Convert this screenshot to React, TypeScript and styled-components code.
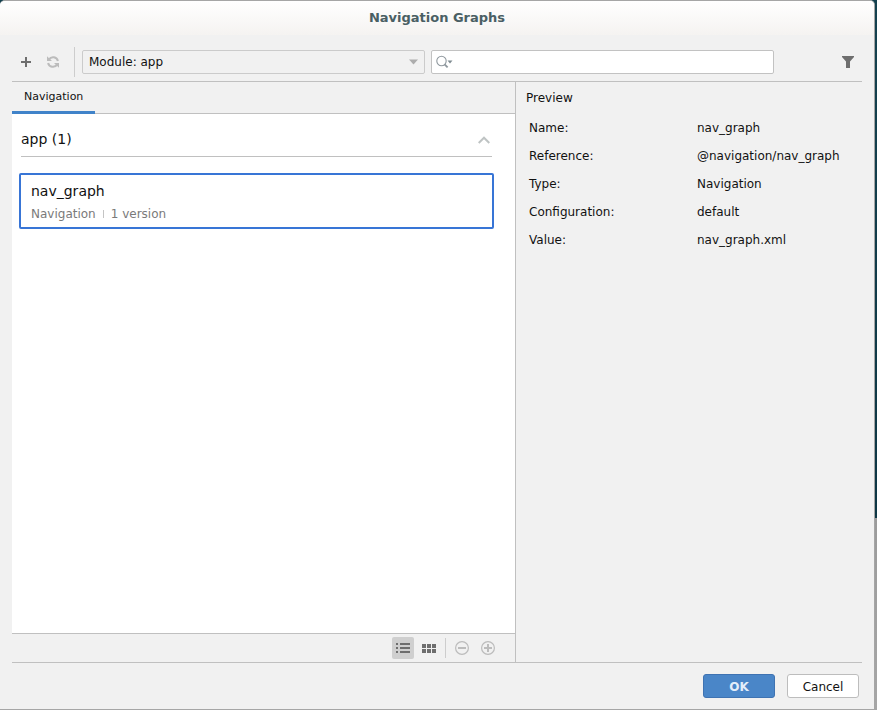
import React from 'react';
import styled, { createGlobalStyle } from 'styled-components';

const line = '#c0c0c0';

const GlobalStyle = createGlobalStyle`
  * { box-sizing: border-box; }
  body {
    margin: 0;
    background: linear-gradient(#14414f 0, #0d3644 73%, #9b9b9b 73%, #a6a6a6 100%);
    color: #111;
    font: 12px/16px "DejaVu Sans", sans-serif;
  }
  button, input, select { font: inherit; color: inherit; }
  svg { display: block; }
`;

const Dialog = styled.div`
  display: flex;
  flex-direction: column;
  min-height: 100vh;
  margin-right: 2px;
  background: #f1f1f1;
  border: solid #a6a6a6;
  border-width: 1px 1px 1px 0;
  border-radius: 5px 5px 0 0;
  overflow: hidden;
`;

const TitleBar = styled.header`
  display: flex;
  align-items: center;
  justify-content: center;
  height: 34px;
  background: linear-gradient(#fff, #f5f3f1);
`;

const Title = styled.h1`
  margin: 0;
  font-size: 13px;
  line-height: 16px;
  font-weight: bold;
  color: #4a5f64;
`;

const Content = styled.main`
  flex: 1;
  display: flex;
  flex-direction: column;
  margin: 0 12px;
`;

const Toolbar = styled.div`
  display: flex;
  align-items: center;
  height: 47px;
  padding: 7px 6px 0 0;
  border-bottom: 1px solid ${line};
`;

const Divider = styled.span<{ $height: number }>`
  width: 1px;
  height: ${p => p.$height}px;
  background: ${p => (p.$height > 12 ? '#cdcdcd' : '#c4c4c4')};
`;

const IconButton = styled.button<{ $width?: number; $active?: boolean }>`
  display: flex;
  align-items: center;
  justify-content: center;
  width: ${p => p.$width ?? 22}px;
  height: 22px;
  padding: 0;
  border: 0;
  border-radius: 2px;
  background: ${p => (p.$active ? '#cfcfcf' : 'transparent')};
`;

const ToolGroup = styled.div`
  display: flex;
  align-items: center;
  gap: 5px;
  padding-left: 3px;
  margin-right: 10px;
`;

const Fields = styled.div`
  flex: 1;
  display: grid;
  grid-template-columns: 1fr 1fr;
  gap: 6px;
  margin: 0 66px 0 7px;
`;

const FieldFrame = styled.label<{ $white?: boolean }>`
  display: flex;
  align-items: center;
  height: 24px;
  padding: 0 ${p => (p.$white ? 4 : 6)}px;
  border: 1px solid ${p => (p.$white ? '#c2c2c2' : '#cbcbcb')};
  border-radius: 2px;
  background: ${p => (p.$white ? '#fff' : '#f1f1f1')};
`;

const ModuleSelect = styled.select`
  flex: 1;
  min-width: 0;
  height: 22px;
  padding: 0;
  border: 0;
  outline: 0;
  appearance: none;
  background: transparent;
`;

const SearchInput = styled.input`
  flex: 1;
  min-width: 0;
  height: 20px;
  padding: 0 4px;
  border: 0;
  outline: 0;
  background: transparent;
`;

const Panes = styled.div`
  flex: 1;
  display: grid;
  grid-template-columns: 504fr 346fr;
  border-bottom: 1px solid ${line};
`;

const ResourcePane = styled.section`
  display: flex;
  flex-direction: column;
  border-right: 1px solid ${line};
`;

const Tabs = styled.nav`
  display: flex;
  height: 32px;
  border-bottom: 1px solid ${line};
`;

const Tab = styled.button`
  height: 32px;
  padding: 0 12px;
  border: 0;
  border-bottom: 3px solid #4083c9;
  background: transparent;
  font-size: 11px;
`;

const ResourceList = styled.div`
  flex: 1;
  padding: 13px 21px 0 7px;
  background: #fff;
`;

const GroupHeader = styled.div`
  display: flex;
  align-items: center;
  justify-content: space-between;
  height: 30px;
  padding: 0 0 6px;
  margin: 0 2px 16px;
  border-bottom: 1px solid ${line};
`;

const GroupName = styled.h2`
  margin: 0;
  font-size: 14px;
  line-height: 24px;
  font-weight: normal;
`;

const CollapseButton = styled(IconButton)`
  width: 16px;
  padding-top: 2px;
`;

const Resource = styled.button`
  display: block;
  width: 100%;
  height: 56px;
  padding: 2px 10px 0;
  border: 2px solid #3875d6;
  border-radius: 2px;
  background: #fff;
  text-align: left;
`;

const ResourceName = styled.span`
  display: block;
  margin-bottom: 6px;
  font-size: 14px;
  line-height: 18px;
`;

const ResourceMeta = styled.span`
  display: flex;
  align-items: center;
  gap: 7px;
  color: #7a7a7a;
`;

const ViewBar = styled.div`
  display: flex;
  align-items: center;
  justify-content: flex-end;
  gap: 4px;
  height: 29px;
  padding-right: 16px;
  border-top: 1px solid ${line};

  ${Divider} { margin: 0 1px; }
`;

const PreviewPane = styled.section`
  padding: 8px 10px;
`;

const PreviewTitle = styled.h2`
  margin: 0 0 8px;
  font-size: 12px;
  line-height: 16px;
  font-weight: normal;
`;

const Details = styled.dl`
  display: grid;
  grid-template-columns: 168px 1fr;
  margin: 0 3px;
  line-height: 28px;

  dd { margin: 0; }
`;

const Footer = styled.footer`
  display: flex;
  justify-content: flex-end;
  gap: 12px;
  padding: 11px 15px;
`;

const DialogButton = styled.button<{ $primary?: boolean }>`
  width: 72px;
  height: 24px;
  padding: 1px 0 0;
  border: 1px solid ${p => (p.$primary ? '#3f73b2' : '#bdbdbd')};
  border-radius: 3px;
  background: ${p => (p.$primary ? '#4a86c8' : '#fff')};
  color: ${p => (p.$primary ? '#e4eefa' : '#111')};
  font-weight: ${p => (p.$primary ? 'bold' : 'normal')};
`;

const PlusIcon = () => (
  <svg width="16" height="16" viewBox="0 0 16 16" fill="#6e6e6e">
    <path d="M7 3h2v4h4v2H9v4H7V9H3V7h4z" />
  </svg>
);

const RefreshIcon = () => (
  <svg width="16" height="16" viewBox="0 0 16 16" fill="none" stroke="#bcbcbc" strokeWidth="2">
    <path d="M4 5.4A4.9 4.9 0 0 1 12.9 7M12 10.6A4.9 4.9 0 0 1 3.1 9" />
    <path d="M2 2.2V7h5zM14 13.8V9H9z" fill="#bcbcbc" stroke="none" />
  </svg>
);

const ArrowDown = () => (
  <svg width="9" height="6" viewBox="0 0 9 6" fill="#adadad">
    <path d="M0 .5h9L4.5 5.5z" />
  </svg>
);

const SearchIcon = () => (
  <svg width="17" height="14" viewBox="0 0 17 14" fill="none" stroke="#8f989e">
    <circle cx="5.5" cy="6" r="4.7" strokeWidth="1.1" />
    <path d="M8.6 9.4 11.6 12.4" strokeWidth="1.8" />
    <path d="M11.5 5.5h5L14 8.5z" fill="#7f8b91" stroke="none" />
  </svg>
);

const FilterIcon = () => (
  <svg width="16" height="16" viewBox="0 0 16 16" fill="#6e6e6e">
    <path d="M2 2h12v1L10 7.5V14H6V7.5L2 3z" />
  </svg>
);

const ChevronUp = () => (
  <svg width="12" height="8" viewBox="0 0 12 8" fill="none" stroke="#bfc4c4" strokeWidth="2">
    <path d="M.7 7 6 1.7 11.3 7" />
  </svg>
);

const ListIcon = () => (
  <svg width="16" height="16" viewBox="0 0 16 16" fill="#6e6e6e">
    <path d="M1 3h2v2H1zM5 3h10v2H5zM1 7h2v2H1zM5 7h10v2H5zM1 11h2v2H1zM5 11h10v2H5z" />
  </svg>
);

const GridIcon = () => (
  <svg width="16" height="16" viewBox="0 0 16 16" fill="#6e6e6e">
    <path d="M1 4h4v4H1zM6 4h4v4H6zM11 4h4v4h-4zM1 9h4v4H1zM6 9h4v4H6zM11 9h4v4h-4z" />
  </svg>
);

const ZoomIcon = ({ plus }: { plus?: boolean }) => (
  <svg width="16" height="16" viewBox="0 0 16 16" fill="none" stroke="#bcbcbc">
    <circle cx="8" cy="8" r="6.4" strokeWidth="1.2" />
    <path d={plus ? 'M4 8h8M8 4v8' : 'M4 8h8'} strokeWidth="2" />
  </svg>
);

const details = [
  ['Name:', 'nav_graph'],
  ['Reference:', '@navigation/nav_graph'],
  ['Type:', 'Navigation'],
  ['Configuration:', 'default'],
  ['Value:', 'nav_graph.xml'],
];

export default function App() {
  return (
    <>
      <GlobalStyle />
      <Dialog role="dialog" aria-labelledby="dialog-title">
        <TitleBar>
          <Title id="dialog-title">Navigation Graphs</Title>
        </TitleBar>
        <Content>
          <Toolbar>
            <ToolGroup>
              <IconButton aria-label="Add"><PlusIcon /></IconButton>
              <IconButton aria-label="Refresh" disabled><RefreshIcon /></IconButton>
            </ToolGroup>
            <Divider $height={30} />
            <Fields>
              <FieldFrame>
                <ModuleSelect aria-label="Module">
                  <option>Module: app</option>
                </ModuleSelect>
                <ArrowDown />
              </FieldFrame>
              <FieldFrame $white>
                <SearchIcon />
                <SearchInput type="text" aria-label="Search" />
              </FieldFrame>
            </Fields>
            <IconButton $width={16} aria-label="Filter"><FilterIcon /></IconButton>
          </Toolbar>
          <Panes>
            <ResourcePane>
              <Tabs>
                <Tab>Navigation</Tab>
              </Tabs>
              <ResourceList>
                <GroupHeader>
                  <GroupName>app (1)</GroupName>
                  <CollapseButton aria-label="Collapse"><ChevronUp /></CollapseButton>
                </GroupHeader>
                <Resource>
                  <ResourceName>nav_graph</ResourceName>
                  <ResourceMeta>
                    Navigation
                    <Divider $height={8} />
                    1 version
                  </ResourceMeta>
                </Resource>
              </ResourceList>
              <ViewBar>
                <IconButton $active aria-label="List view"><ListIcon /></IconButton>
                <IconButton aria-label="Grid view"><GridIcon /></IconButton>
                <Divider $height={20} />
                <IconButton aria-label="Zoom out" disabled><ZoomIcon /></IconButton>
                <IconButton aria-label="Zoom in" disabled><ZoomIcon plus /></IconButton>
              </ViewBar>
            </ResourcePane>
            <PreviewPane>
              <PreviewTitle>Preview</PreviewTitle>
              <Details>
                {details.map(([label, value]) => (
                  <React.Fragment key={label}>
                    <dt>{label}</dt>
                    <dd>{value}</dd>
                  </React.Fragment>
                ))}
              </Details>
            </PreviewPane>
          </Panes>
        </Content>
        <Footer>
          <DialogButton $primary>OK</DialogButton>
          <DialogButton>Cancel</DialogButton>
        </Footer>
      </Dialog>
    </>
  );
}
